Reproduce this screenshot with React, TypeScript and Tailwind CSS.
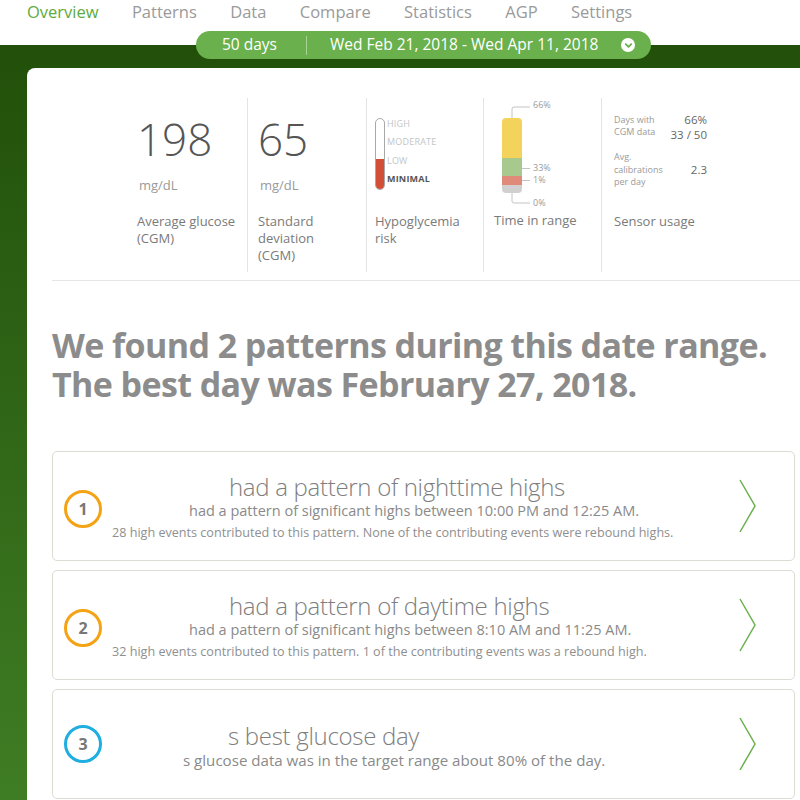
import { ChevronDown } from 'lucide-react'

const navItems = ['Overview', 'Patterns', 'Data', 'Compare', 'Statistics', 'AGP', 'Settings']

type Pattern = {
  n: number
  ring: string
  title: string
  titleGap: number
  line: string
  lineGap: number
  lineSize: string
  note?: string
}

const patterns: Pattern[] = [
  {
    n: 1,
    ring: 'border-[#f4a315]',
    title: 'had a pattern of nighttime highs',
    titleGap: 117,
    line: 'had a pattern of significant highs between 10:00 PM and 12:25 AM.',
    lineGap: 77,
    lineSize: 'text-[14.5px]',
    note: '28 high events contributed to this pattern. None of the contributing events were rebound highs.',
  },
  {
    n: 2,
    ring: 'border-[#f4a315]',
    title: 'had a pattern of daytime highs',
    titleGap: 117,
    line: 'had a pattern of significant highs between 8:10 AM and 11:25 AM.',
    lineGap: 77,
    lineSize: 'text-[14.5px]',
    note: '32 high events contributed to this pattern. 1 of the contributing events was a rebound high.',
  },
  {
    n: 3,
    ring: 'border-[#1eaee0]',
    title: 's best glucose day',
    titleGap: 116,
    line: 's glucose data was in the target range about 80% of the day.',
    lineGap: 71,
    lineSize: 'text-[15.1px]',
  },
]

function StatNumber({ value, label }: { value: string; label: string[] }) {
  return (
    <div className="flex flex-col pl-[10px] pt-[19px]">
      <div className="text-[44px] leading-[44px] font-light text-[#555]">{value}</div>
      <div className="mt-[16px] pl-[2px] text-[13px] leading-[17px] text-[#9a9a9a]">mg/dL</div>
      <div className="mt-[19px] text-[13px] leading-[17px] text-[#7a7a7a]">
        {label.map((l) => (
          <div key={l}>{l}</div>
        ))}
      </div>
    </div>
  )
}

function HypoRisk() {
  return (
    <div className="flex flex-col pl-[8px] pt-[20px]">
      <div className="flex gap-[2px]">
        <div className="w-[10px] h-[72px] rounded-full border border-[#a8a8a8] flex flex-col justify-end overflow-hidden">
          <div className="h-[30px] bg-[#d24e37]" />
        </div>
        <div className="-mt-[3px] flex flex-col text-[9px] leading-[18.3px] tracking-[0.2px] text-[#c2c6c6]">
          <span>HIGH</span>
          <span>MODERATE</span>
          <span>LOW</span>
          <span className="font-bold text-[#555]">MINIMAL</span>
        </div>
      </div>
      <div className="mt-[23px] text-[13px] leading-[17px] text-[#7a7a7a]">
        <div>Hypoglycemia</div>
        <div>risk</div>
      </div>
    </div>
  )
}

function TimeInRange() {
  return (
    <div className="flex flex-col pl-[10px]">
      <div className="relative h-[108px]">
        <svg width="60" height="108" viewBox="0 0 60 108" className="absolute left-0 top-0">
          <path d="M18 21 V11 Q18 9 20 9 H36" fill="none" stroke="#c4c4c4" strokeWidth="1" />
          <path d="M18 94 V103 Q18 105 20 105 H36" fill="none" stroke="#c4c4c4" strokeWidth="1" />
          <line x1="28" y1="70.5" x2="36" y2="70.5" stroke="#c4c4c4" strokeWidth="1" />
          <line x1="28" y1="82.5" x2="36" y2="82.5" stroke="#c4c4c4" strokeWidth="1" />
        </svg>
        <div className="absolute left-[8px] top-[20px] w-[20px] h-[75px] rounded-[4px] overflow-hidden flex flex-col">
          <div className="h-[40px] bg-[#f3d35c]" />
          <div className="h-[18px] bg-[#a7c98e]" />
          <div className="h-[9px] bg-[#e08b79]" />
          <div className="flex-1 bg-[#d0d0d0]" />
        </div>
        <span className="absolute left-[39px] top-[1px] text-[9px] leading-[12px] text-[#9a9a9a]">66%</span>
        <span className="absolute left-[39px] top-[64px] text-[9px] leading-[12px] text-[#9a9a9a]">33%</span>
        <span className="absolute left-[39px] top-[76px] text-[9px] leading-[12px] text-[#9a9a9a]">1%</span>
        <span className="absolute left-[39px] top-[99px] text-[9px] leading-[12px] text-[#9a9a9a]">0%</span>
      </div>
      <div className="mt-[6px] text-[13px] leading-[17px] text-[#7a7a7a]">Time in range</div>
    </div>
  )
}

function SensorUsage() {
  return (
    <div className="flex flex-col pl-[12px] pt-[14px]">
      <div className="flex w-[93px] justify-between">
        <div className="text-[9px] leading-[12px] text-[#9a9a9a] pt-[2px]">
          <div>Days with</div>
          <div>CGM data</div>
        </div>
        <div className="text-[11.5px] leading-[15px] text-[#666] text-right">
          <div>66%</div>
          <div>33 / 50</div>
        </div>
      </div>
      <div className="flex w-[93px] justify-between items-center mt-[9px]">
        <div className="text-[9px] leading-[12.5px] text-[#9a9a9a]">
          <div>Avg.</div>
          <div>calibrations</div>
          <div>per day</div>
        </div>
        <div className="text-[11.5px] leading-[15px] text-[#666]">2.3</div>
      </div>
      <div className="mt-[24px] text-[13px] leading-[17px] text-[#7a7a7a]">Sensor usage</div>
    </div>
  )
}

function PatternCard({ p }: { p: Pattern }) {
  return (
    <div className="h-[110px] w-[743px] shrink-0 rounded-[5px] border border-[#dcdcd3] bg-white flex items-center">
      <div className={`ml-[11px] w-[38px] h-[38px] rounded-full border-[3px] ${p.ring} flex items-center justify-center text-[16px] font-bold text-[#777] ${p.note ? 'mt-[6px]' : 'mt-0'}`}>
        {p.n}
      </div>
      <div className="ml-[10px] flex-1 flex flex-col pt-[5px]">
        <div className="flex text-[24px] leading-[26px] font-light text-[#7e7e7e] tracking-[-0.3px]">
          <span style={{ width: p.titleGap }} className="shrink-0" />
          <span>{p.title}</span>
        </div>
        <div className={`flex ${p.lineSize} leading-[22px] text-[#8a8a8a]`}>
          <span style={{ width: p.lineGap }} className="shrink-0" />
          <span>{p.line}</span>
        </div>
        {p.note && <div className="text-[12.6px] leading-[21px] text-[#8f8f8f]">{p.note}</div>}
      </div>
      <svg width="18" height="54" viewBox="0 0 18 54" className="mr-[37px]">
        <polyline points="1,1 16,27 1,53" fill="none" stroke="#6ab04c" strokeWidth="1.5" />
      </svg>
    </div>
  )
}

export default function App() {
  return (
    <div className="relative w-[800px] h-[800px] overflow-hidden flex flex-col font-['Open_Sans',_sans-serif] bg-white">
      <nav className="h-[45px] shrink-0 bg-white flex items-start pl-[27px] gap-[33.4px] text-[16.5px] leading-[24px] text-[#9a9a9a]">
        {navItems.map((item) => (
          <span key={item} className={item === 'Overview' ? 'text-[#5cab3e]' : ''}>
            {item}
          </span>
        ))}
      </nav>

      <div className="absolute left-[196px] top-[31px] h-[28px] w-[455px] rounded-full bg-[#6ab04c] flex items-center text-white text-[15.5px] z-10">
        <span className="ml-[26px]">50 days</span>
        <span className="ml-[29px] h-[19px] w-px bg-[#a8d392]" />
        <span className="ml-[23px]">Wed Feb 21, 2018 - Wed Apr 11, 2018</span>
        <span className="ml-[23px] w-[14px] h-[14px] rounded-full bg-white flex items-center justify-center">
          <ChevronDown className="w-[11px] h-[11px] text-[#6ab04c]" strokeWidth={4} />
        </span>
      </div>

      <div className="flex-1 bg-gradient-to-b from-[#22500a] to-[#3f7d24] pl-[27px] pt-[23px]">
        <div className="h-full bg-white rounded-tl-[8px] pl-[25px] pt-[30px]">
          <div className="ml-[75px] grid grid-cols-[120px_119px_117px_118px_150px] h-[174px]">
            <StatNumber value="198" label={['Average glucose', '(CGM)']} />
            <div className="border-l border-[#e4e4e4]">
              <StatNumber value="65" label={['Standard', 'deviation', '(CGM)']} />
            </div>
            <div className="border-l border-[#e4e4e4]">
              <HypoRisk />
            </div>
            <div className="border-l border-[#e4e4e4]">
              <TimeInRange />
            </div>
            <div className="border-l border-[#e4e4e4]">
              <SensorUsage />
            </div>
          </div>

          <div className="mt-[8px] border-t border-[#e6e6e6]" />

          <h1 className="mt-[45px] text-[34px] leading-[39px] font-bold text-[#8c8c8c] tracking-[-0.6px]">
            We found 2 patterns during this date range.
            <br />
            The best day was February 27, 2018.
          </h1>

          <div className="mt-[47px] flex flex-col gap-[9px]">
            {patterns.map((p) => (
              <PatternCard key={p.n} p={p} />
            ))}
          </div>
        </div>
      </div>
    </div>
  )
}
